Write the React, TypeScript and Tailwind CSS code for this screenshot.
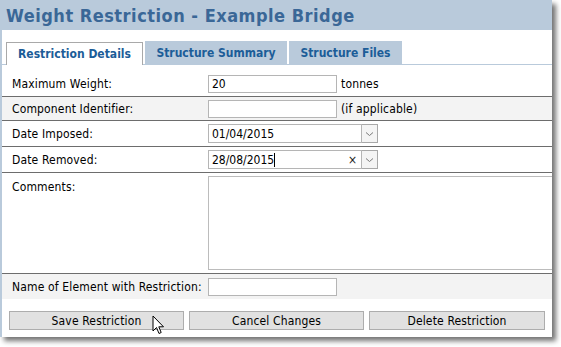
import React from "react";

const F = { fontFamily: "Tahoma, 'DejaVu Sans Condensed', 'DejaVu Sans', sans-serif" };

function Chevron() {
  return (
    <svg width="9" height="6" viewBox="0 0 9 6">
      <path d="M1 1.5 L4.5 4.5 L8 1.5" fill="none" stroke="#7a7a7a" strokeWidth="1" />
    </svg>
  );
}

function DateField({ value, clear }: { value: string; clear?: boolean }) {
  return (
    <div className="flex h-[19px] w-[170px]">
      <div className="flex-1 flex items-center border border-[#b5b5b5] bg-white pl-[3px] pr-[4px] text-[12px] text-black">
        <span>{value}</span>
        {clear && <span className="w-px h-[14px] bg-black" />}
        <span className="flex-1" />
        {clear && <span className="text-[12px] leading-none text-[#222]">×</span>}
      </div>
      <div className="w-[16px] flex items-center justify-center border border-[#a8a8a8] border-l-0 bg-[#f4f4f4]">
        <Chevron />
      </div>
    </div>
  );
}

function Row({ label, children, gray, className = "" }: { label: string; children: React.ReactNode; gray?: boolean; className?: string }) {
  return (
    <div className={`flex items-center border-b border-[#6d6d6d] ${gray ? "bg-[#f3f3f3]" : "bg-white"} ${className}`}>
      <div className="w-[206px] shrink-0 pl-[10px] text-[12px] tracking-[0.15px] text-black">{label}</div>
      <div className="flex items-center">{children}</div>
    </div>
  );
}

export default function App() {
  return (
    <div className="w-[561px] h-[347px] bg-white" style={F}>
      <div className="relative w-[552px] h-[337px] border-l-2 border-[#b9cadb] bg-white shadow-[4px_4px_5px_rgba(0,0,0,0.55)] overflow-hidden">
        <div className="h-[30px] bg-[#b9cadb] flex items-center -ml-[2px] pl-[6px]">
          <span className="text-[18px] font-bold text-[#3a6797] tracking-[0.5px]">Weight Restriction - Example Bridge</span>
        </div>
        <div className="pt-[12px] pl-[4px] flex items-end border-b border-[#b9cadb] h-[35px]">
          <div className="h-[23px] w-[137px] border border-b-0 border-[#a9a9a9] bg-white flex items-center justify-center text-[12px] font-bold text-[#1c5d98] relative top-[1px]">
            Restriction Details
          </div>
          <div className="ml-[2px] h-[23px] w-[142px] bg-[#b9cadb] flex items-center justify-center text-[12px] font-bold text-[#1c5d98]">
            Structure Summary
          </div>
          <div className="ml-[2px] h-[23px] w-[113px] bg-[#b9cadb] flex items-center justify-center text-[12px] font-bold text-[#1c5d98]">
            Structure Files
          </div>
        </div>

        <Row label="Maximum Weight:" className="h-[32px] pt-[7px]">
          <div className="h-[18px] w-[129px] border border-[#b5b5b5] bg-white pl-[3px] text-[12px] leading-[16px] text-black">20</div>
          <span className="ml-[4px] text-[12px] tracking-[0.15px] text-black">tonnes</span>
        </Row>
        <Row label="Component Identifier:" gray className="h-[24px]">
          <div className="h-[18px] w-[129px] border border-[#b5b5b5] bg-white" />
          <span className="ml-[4px] text-[12px] tracking-[0.15px] text-black">(if applicable)</span>
        </Row>
        <Row label="Date Imposed:" className="h-[26px]">
          <DateField value="01/04/2015" />
        </Row>
        <Row label="Date Removed:" className="h-[26px]">
          <DateField value="28/08/2015" clear />
        </Row>
        <div className="flex border-b border-[#6d6d6d] h-[101px] bg-white">
          <div className="w-[206px] shrink-0 pl-[10px] pt-[5px] text-[12px] tracking-[0.15px] text-black">Comments:</div>
          <div className="mt-[3px] h-[94px] w-[360px] shrink-0 border border-[#bcbcbc] bg-white" />
        </div>
        <div className="flex items-center h-[25px] bg-[#f3f3f3]">
          <div className="w-[206px] shrink-0 pl-[10px] text-[12px] tracking-[0.15px] text-black">Name of Element with Restriction:</div>
          <div className="h-[18px] w-[129px] border border-[#b5b5b5] bg-white" />
        </div>

        <div className="mt-[12px] pl-[7px] flex gap-[5px]">
          <button className="h-[19px] w-[175px] border border-[#adadad] bg-[#e1e1e1] text-[12px] tracking-[0.15px] text-black leading-none">Save Restriction</button>
          <button className="h-[19px] w-[175px] border border-[#adadad] bg-[#e1e1e1] text-[12px] tracking-[0.15px] text-black leading-none">Cancel Changes</button>
          <button className="h-[19px] w-[176px] border border-[#adadad] bg-[#e1e1e1] text-[12px] tracking-[0.15px] text-black leading-none">Delete Restriction</button>
        </div>

        <svg className="absolute left-[150px] top-[315px]" width="13" height="20" viewBox="0 0 13 20">
          <path d="M1 1 L1 16 L4.5 12.5 L7 18.5 L9.2 17.5 L6.8 11.8 L11.5 11.8 Z" fill="#fff" stroke="#000" strokeWidth="1" strokeLinejoin="round" />
        </svg>
      </div>
    </div>
  );
}
